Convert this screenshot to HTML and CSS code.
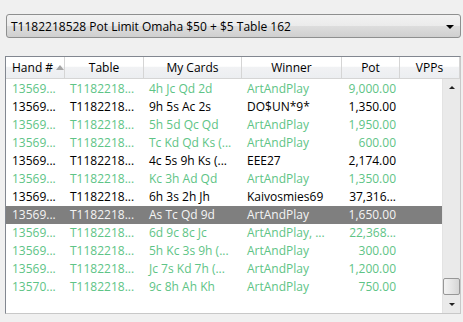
FILE: index.html
```html
<!DOCTYPE html>
<html lang="en">
<head>
  <meta charset="UTF-8">
  <title>Hand History</title>
  <link rel="stylesheet" href="styles.css">
</head>
<body>
  <div class="combo">
    <span class="combo-text">T1182218528 Pot Limit Omaha $50 + $5 Table 162</span>
    <span class="combo-arrow"></span>
  </div>

  <div class="list">
    <div class="list-head">
      <div class="hcell hand">Hand #<span class="sort-arrow"></span></div>
      <div class="hcell">Table</div>
      <div class="hcell">My Cards</div>
      <div class="hcell">Winner</div>
      <div class="hcell">Pot</div>
      <div class="hcell">VPPs</div>
    </div>
    <div class="list-main">
      <div class="rows" id="rows"></div>
      <div class="vscroll">
        <div class="sb-btn"><span class="tri-up"></span></div>
        <div class="sb-track">
          <div class="sb-thumb"></div>
        </div>
        <div class="sb-btn"><span class="tri-down"></span></div>
      </div>
    </div>
  </div>

  <script>
    // hands as shown in the list
    const hands = [
      ['13569...', 'T1182218...', '4h Jc Qd 2d', 'ArtAndPlay', '9,000.00', 'won'],
      ['13569...', 'T1182218...', '9h 5s Ac 2s', 'DO$UN*9*', '1,350.00', 'lost'],
      ['13569...', 'T1182218...', '5h 5d Qc Qd', 'ArtAndPlay', '1,950.00', 'won'],
      ['13569...', 'T1182218...', 'Tc Kd Qd Ks (...', 'ArtAndPlay', '600.00', 'won'],
      ['13569...', 'T1182218...', '4c 5s 9h Ks (...', 'EEE27', '2,174.00', 'lost'],
      ['13569...', 'T1182218...', 'Kc 3h Ad Qd', 'ArtAndPlay', '1,350.00', 'won'],
      ['13569...', 'T1182218...', '6h 3s 2h Jh', 'Kaivosmies69', '37,316...', 'lost'],
      ['13569...', 'T1182218...', 'As Tc Qd 9d', 'ArtAndPlay', '1,650.00', 'selected'],
      ['13569...', 'T1182218...', '6d 9c 8c Jc', 'ArtAndPlay, ...', '22,368...', 'won'],
      ['13569...', 'T1182218...', '5h Kc 3s 9h (...', 'ArtAndPlay', '300.00', 'won'],
      ['13569...', 'T1182218...', 'Jc 7s Kd 7h (...', 'ArtAndPlay', '1,200.00', 'won'],
      ['13570...', 'T1182218...', '9c 8h Ah Kh', 'ArtAndPlay', '750.00', 'won'],
    ];

    const rows = document.getElementById('rows');
    hands.forEach((h) => {
      const row = document.createElement('div');
      row.className = 'row ' + h[5];
      row.innerHTML = `
        <div class="cell">${h[0]}</div>
        <div class="cell">${h[1]}</div>
        <div class="cell">${h[2]}</div>
        <div class="cell">${h[3]}</div>
        <div class="cell num">${h[4]}</div>
        <div class="cell"></div>`;
      rows.appendChild(row);
    });
  </script>
</body>
</html>
```

FILE: styles.css
```css
body {
  margin: 0;
  padding: 14px 2px 0 5px;
  background-color: #f0f0f0;
  font-family: "Open Sans", "Noto Sans", sans-serif;
  font-size: 12px;
  color: #000;
  height: 308px;
  overflow: hidden;
}

.combo {
  display: flex;
  align-items: center;
  justify-content: space-between;
  height: 22px;
  margin-left: 1px;
  padding: 0 6px 0 4px;
  border: 1px solid #8e8f8f;
  border-radius: 3px;
  background: linear-gradient(#f2f2f2, #ebebeb 50%, #dddddd 51%, #cfcfcf);
}

.combo-arrow {
  width: 0;
  height: 0;
  border-left: 4px solid transparent;
  border-right: 4px solid transparent;
  border-top: 4px solid #000;
  margin-top: 2px;
}

.list {
  margin-top: 18px;
  height: 256px;
  background: #fff;
  border: 1px solid #828790;
  border-bottom-color: #c8c8c8;
  border-right-color: #c8c8c8;
  display: flex;
  flex-direction: column;
}

.list-head {
  display: grid;
  grid-template-columns: 59px 79px 98px 100px 58px 1fr;
  height: 21px;
  border-bottom: 1px solid #d5d5d5;
  background: linear-gradient(#ffffff, #ffffff 45%, #f1f2f4 46%, #eceef1);
}

.hcell {
  position: relative;
  border-right: 1px solid #d5d5d5;
  text-align: center;
  line-height: 21px;
  white-space: nowrap;
}

.hcell.hand {
  text-align: left;
  padding-left: 6px;
}

.sort-arrow {
  position: absolute;
  left: 50px;
  top: 8px;
  width: 0;
  height: 0;
  border-left: 4px solid transparent;
  border-right: 4px solid transparent;
  border-bottom: 5px solid #a6a6a6;
}

.list-main {
  flex: 1;
  display: flex;
  min-height: 0;
}

.rows {
  flex: 1;
  padding-top: 1px;
}

.row {
  display: grid;
  grid-template-columns: 59px 79px 98px 100px 58px 1fr;
  height: 18px;
  line-height: 18px;
  white-space: nowrap;
}

.cell {
  padding-left: 5px;
  overflow: hidden;
}

.cell:first-child {
  padding-left: 6px;
}

.cell.num {
  text-align: right;
  padding-left: 0;
  padding-right: 4px;
}

.row.won {
  color: #5ec486;
}

.row.lost {
  color: #000;
}

.row.selected {
  background-color: #7f7f7f;
  color: #f4f4f4;
}

.vscroll {
  width: 17px;
  display: flex;
  flex-direction: column;
  background: #eaeaea;
  border-left: 1px solid #e3e3e3;
}

.sb-btn {
  height: 17px;
  display: flex;
  align-items: center;
  justify-content: center;
}

.tri-up {
  width: 0;
  height: 0;
  border-left: 3px solid transparent;
  border-right: 3px solid transparent;
  border-bottom: 3px solid #222;
}

.tri-down {
  width: 0;
  height: 0;
  border-left: 3px solid transparent;
  border-right: 3px solid transparent;
  border-top: 3px solid #222;
}

.sb-track {
  flex: 1;
  display: flex;
  flex-direction: column;
  justify-content: flex-end;
  padding-bottom: 1px;
}

.sb-thumb {
  height: 15px;
  margin: 0 0 0 0;
  border: 1px solid #979797;
  border-radius: 2px;
  background: linear-gradient(90deg, #f2f2f2, #e6e6e6 50%, #d6d6d6);
}
```
